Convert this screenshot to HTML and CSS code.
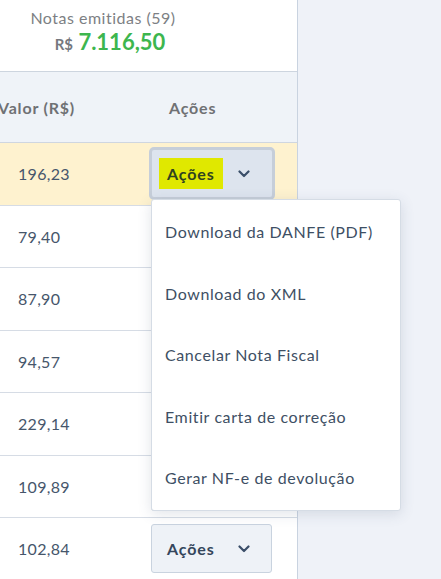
FILE: index.html
```html
<!DOCTYPE html>
<html lang="pt-BR">
<head>
<meta charset="utf-8">
<link rel="stylesheet" href="styles.css">
</head>
<body>
<div class="panel">
  <div class="summary">
    <div class="summary-inner">
      <div class="count">Notas emitidas (59)</div>
      <div class="total"><span class="cur">R$</span> 7.116,50</div>
    </div>
  </div>
  <div class="table">
    <div class="row head">
      <div class="c-val">Valor (R$)</div>
      <div class="c-act">Ações</div>
    </div>
    <div class="row sel">
      <div class="c-val">196,23</div>
      <div class="c-act">
        <div class="btn active"><mark class="hl">Ações</mark><svg class="chev" viewBox="0 0 12 8"><path d="M1.5 1.5 6 6l4.5-4.5"/></svg></div>
      </div>
    </div>
    <div class="row"><div class="c-val">79,40</div><div class="c-act"><div class="btn"><span>Ações</span><svg class="chev" viewBox="0 0 12 8"><path d="M1.5 1.5 6 6l4.5-4.5"/></svg></div></div></div>
    <div class="row"><div class="c-val">87,90</div><div class="c-act"><div class="btn"><span>Ações</span><svg class="chev" viewBox="0 0 12 8"><path d="M1.5 1.5 6 6l4.5-4.5"/></svg></div></div></div>
    <div class="row"><div class="c-val">94,57</div><div class="c-act"><div class="btn"><span>Ações</span><svg class="chev" viewBox="0 0 12 8"><path d="M1.5 1.5 6 6l4.5-4.5"/></svg></div></div></div>
    <div class="row"><div class="c-val">229,14</div><div class="c-act"><div class="btn"><span>Ações</span><svg class="chev" viewBox="0 0 12 8"><path d="M1.5 1.5 6 6l4.5-4.5"/></svg></div></div></div>
    <div class="row"><div class="c-val">109,89</div><div class="c-act"><div class="btn"><span>Ações</span><svg class="chev" viewBox="0 0 12 8"><path d="M1.5 1.5 6 6l4.5-4.5"/></svg></div></div></div>
    <div class="row"><div class="c-val">102,84</div><div class="c-act"><div class="btn"><span>Ações</span><svg class="chev" viewBox="0 0 12 8"><path d="M1.5 1.5 6 6l4.5-4.5"/></svg></div></div></div>
  </div>
</div>
<ul class="menu">
  <li>Download da DANFE (PDF)</li>
  <li>Download do XML</li>
  <li>Cancelar Nota Fiscal</li>
  <li>Emitir carta de correção</li>
  <li>Gerar NF-e de devolução</li>
</ul>
</body>
</html>
```
FILE: styles.css
```css
* { box-sizing: border-box; }
html, body { margin: 0; height: 100%; }
body {
  background: #eff2f8;
  font-family: Lato, "Open Sans", sans-serif;
  color: #46566b;
  overflow: hidden;
  position: relative;
}
.panel {
  width: 298px;
  min-height: 100%;
  background: #fff;
  border-right: 1px solid #c9d3e0;
}
.summary {
  height: 72px;
  border-bottom: 1px solid #cdd5df;
  display: flex;
}
.summary-inner {
  width: 206px;
  text-align: center;
  padding-top: 8px;
}
.count {
  font-size: 16px;
  letter-spacing: 0.5px;
  color: #7d7f84;
  line-height: 20px;
}
.total {
  font-size: 22px;
  font-weight: 700;
  color: #3db64e;
  line-height: 26px;
  margin-top: 1px;
  padding-left: 14px;
}
.cur {
  font-size: 15px;
  color: #75787e;
}
.row {
  display: flex;
  align-items: center;
  height: 62.5px;
  border-bottom: 1px solid #d6dce5;
  font-size: 16px;
  letter-spacing: 0.3px;
}
.row.head {
  height: 71px;
  background: #eff3f8;
  border-bottom-color: #cfd6e0;
  font-weight: 700;
  color: #6f7174;
  letter-spacing: 0.8px;
}
.row.sel { background: #fef2cf; }
.c-val { width: 151px; padding-left: 18px; }
.head .c-val { margin-left: -20px; width: 171px; padding-left: 18px; }
.head .c-act { padding-left: 18px; }
.c-act { flex: 1; }
.btn {
  width: 121px;
  height: 49px;
  border: 1px solid #c9d3df;
  border-radius: 3px;
  background: #eef2f7;
  display: flex;
  align-items: center;
  padding-left: 15px;
  font-weight: 700;
  font-size: 16px;
  letter-spacing: 0.9px;
  color: #34465c;
}
.btn.active {
  width: 126px;
  height: 53px;
  margin-left: -2px;
  border: 3px solid #c6ced9;
  border-radius: 5px;
  background: #dde4ee;
  padding-left: 7px;
}
.hl {
  background: #e0e800;
  color: #2f4221;
  padding: 6px 8px 6px 8px;
  line-height: 19px;
}
.chev {
  width: 12px;
  height: 8px;
  margin-left: auto;
  margin-right: 21px;
  fill: none;
  stroke: #3a4e68;
  stroke-width: 2.2;
  stroke-linecap: round;
  stroke-linejoin: round;
}
.btn.active .chev { margin-right: 22px; }
.menu {
  position: absolute;
  left: 151px;
  top: 199px;
  width: 250px;
  margin: 0;
  padding: 1px 0;
  list-style: none;
  background: #fff;
  border: 1px solid #d5dce5;
  border-radius: 3px;
  box-shadow: 0 3px 14px rgba(70, 90, 120, 0.16);
}
.menu li {
  height: 61.5px;
  line-height: 61.5px;
  padding-left: 13px;
  font-size: 16px;
  letter-spacing: 0.6px;
  color: #3e4f64;
  white-space: nowrap;
}
```
